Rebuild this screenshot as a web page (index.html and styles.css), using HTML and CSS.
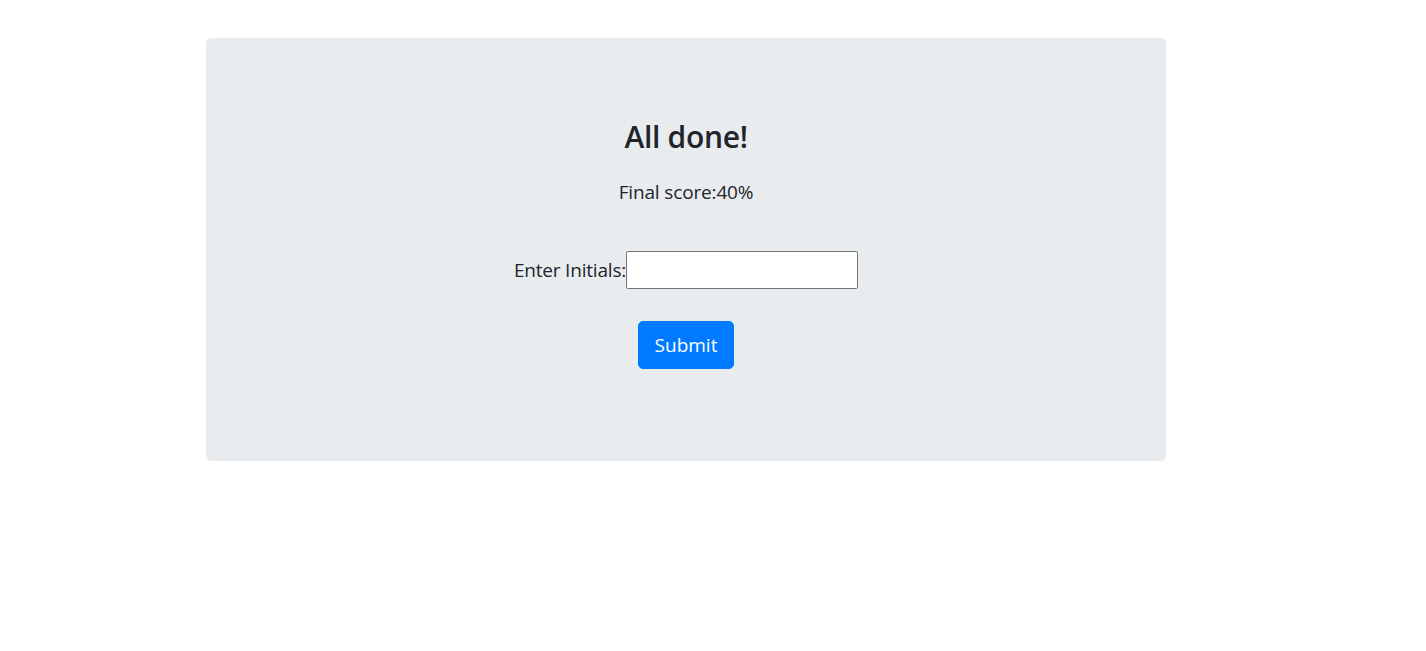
FILE: index.html
```html
<!DOCTYPE html>
<html lang="en">
<head>
<meta charset="utf-8">
<title>Quiz</title>
<link rel="stylesheet" href="styles.css">
</head>
<body>
<div class="page">
  <div class="jumbo">
    <h2 class="title">All done!</h2>
    <p class="score">Final score:40%</p>
    <div class="form-row">
      <label class="label" for="initials">Enter Initials:</label><input class="input" id="initials" type="text">
    </div>
    <button class="btn" type="button">Submit</button>
  </div>
</div>
</body>
</html>
```
FILE: styles.css
```css
html, body {
  margin: 0;
  padding: 0;
  background: #fff;
}
body {
  font-family: "Open Sans", "Noto Sans", sans-serif;
  color: #212529;
}
.page {
  padding-top: 38px;
}
.jumbo {
  margin-left: 206px;
  width: 960px;
  height: 423px;
  box-sizing: border-box;
  background: #e9ecef;
  border-radius: 5px;
  padding-top: 80px;
  display: flex;
  flex-direction: column;
  align-items: center;
}
.title {
  margin: 0;
  font-size: 30px;
  font-weight: 600;
  line-height: 38px;
  letter-spacing: -0.3px;
}
.score {
  margin: 21px 0 0;
  font-size: 19px;
  line-height: 30px;
  letter-spacing: -0.15px;
}
.form-row {
  margin-top: 44px;
  display: flex;
  align-items: center;
  height: 38px;
}
.label {
  font-size: 19px;
  letter-spacing: -0.2px;
}
.input {
  width: 232px;
  height: 38px;
  box-sizing: border-box;
  border: 1px solid #767676;
  border-radius: 2px;
  background: #fff;
  margin: 0;
  padding: 0 4px;
}
.btn {
  margin-top: 32px;
  height: 48px;
  width: 96px;
  box-sizing: border-box;
  background: #007bff;
  color: #fff;
  border: 1px solid #007bff;
  border-radius: 5px;
  font-family: inherit;
  font-size: 19px;
  padding: 0;
}
```
